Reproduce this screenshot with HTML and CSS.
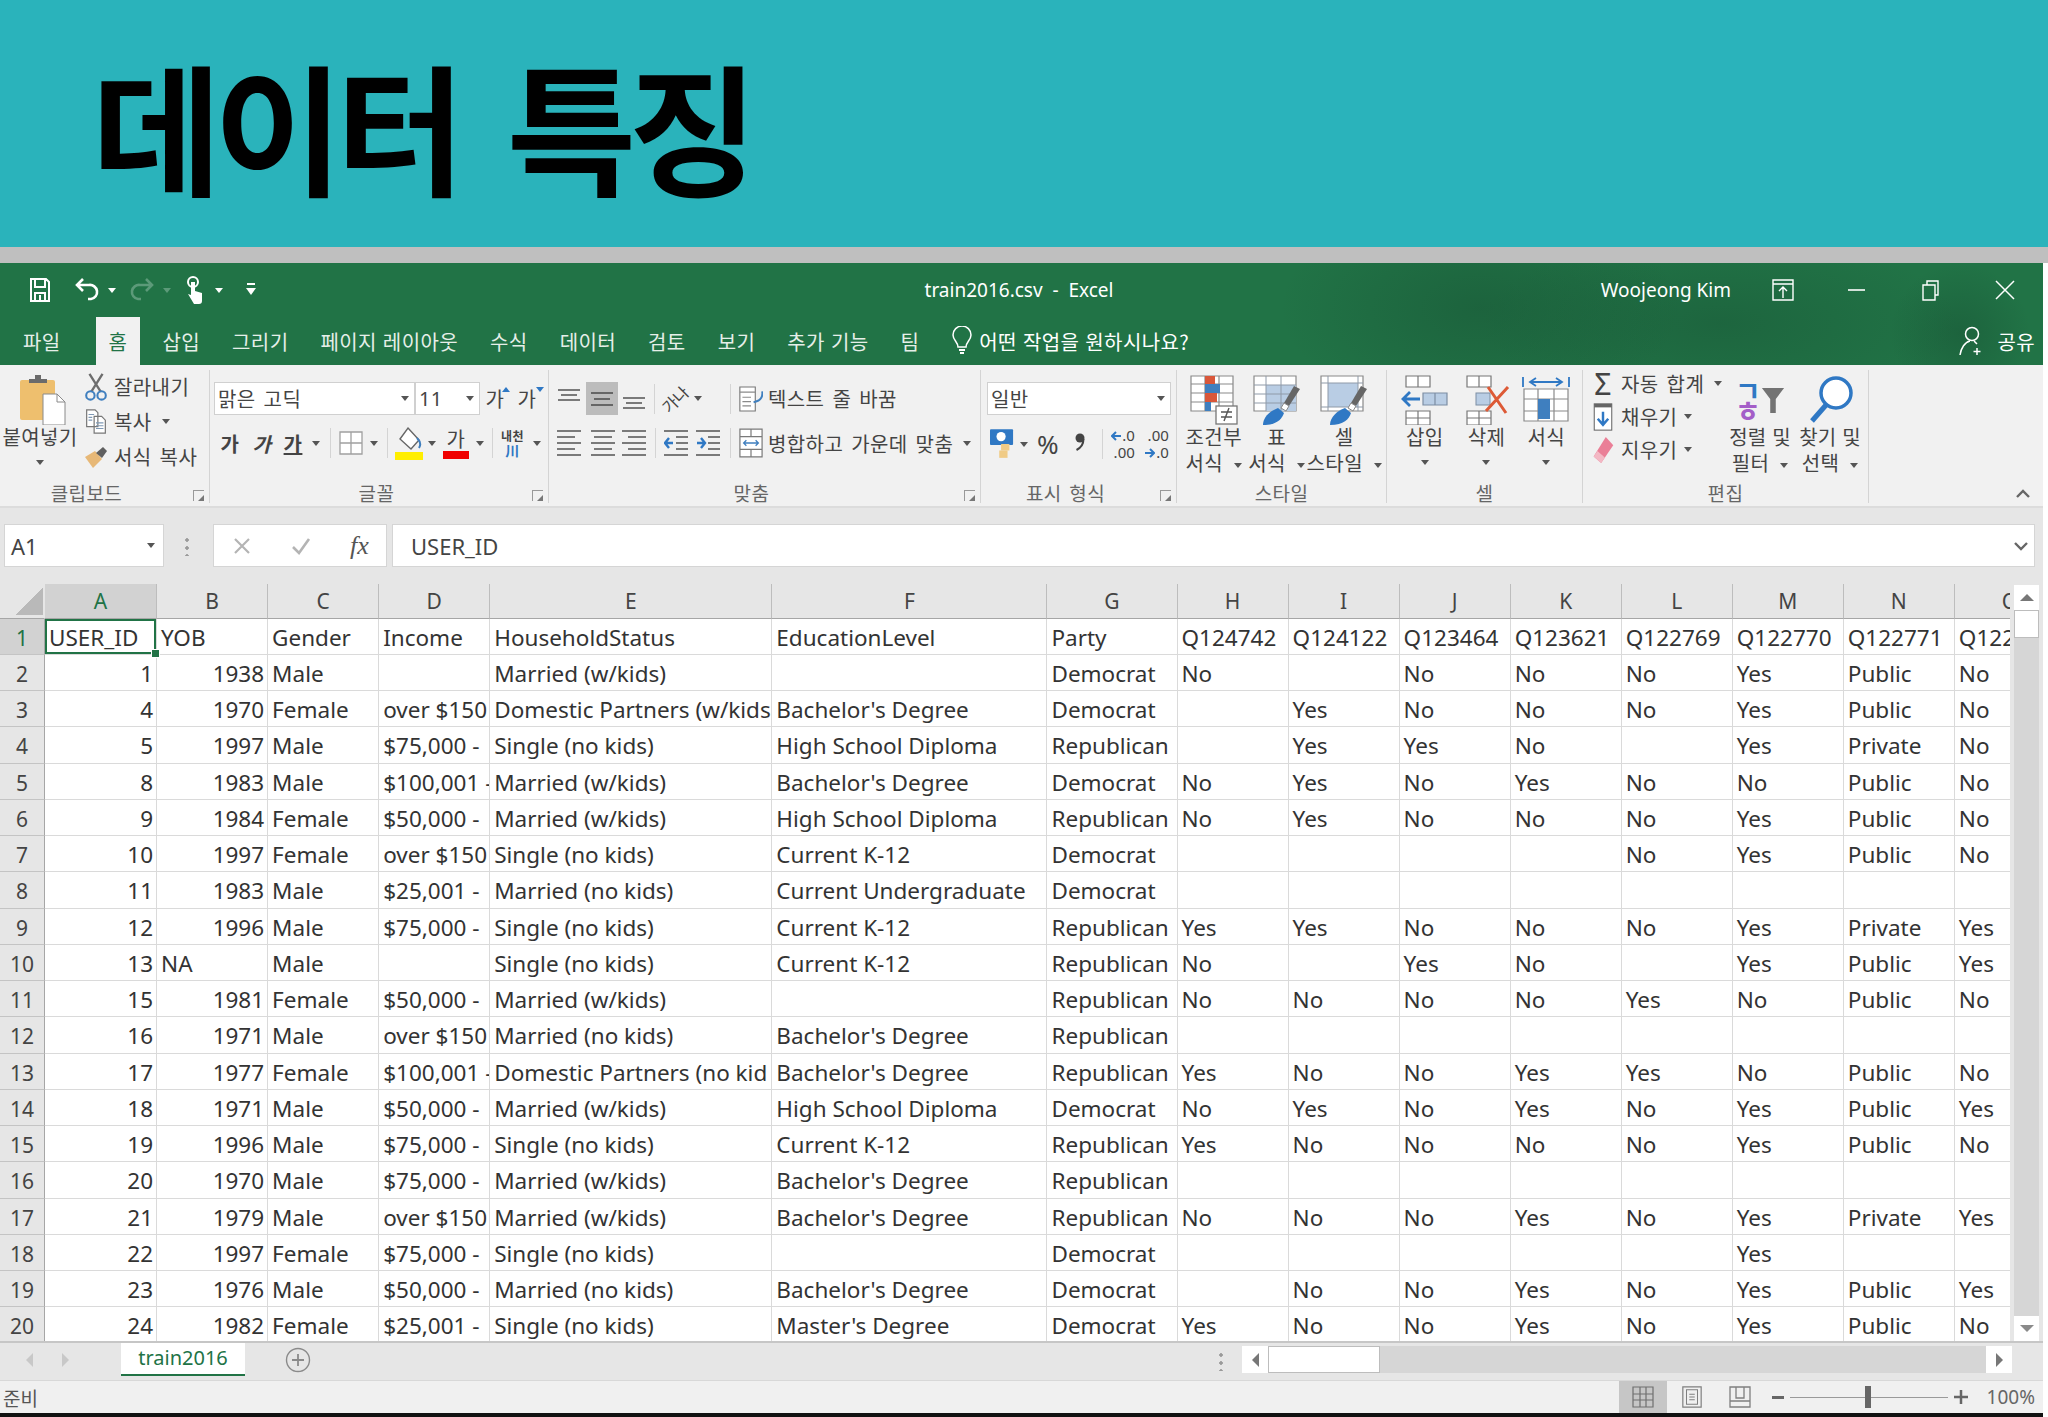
FILE: index.html
```html
<!DOCTYPE html>
<html lang="ko">
<head>
    <meta charset="UTF-8">
    <title>데이터 특징</title>
    <link rel="stylesheet" href="styles.css">
</head>
<body>
    <header class="banner">
        <h1>데이터 특징</h1>
    </header>
    <div class="band"></div>

    <main class="excel">
        <div class="chrome">
            <div class="titlebar">
                <div class="qat">
                    <svg class="qat-save" viewBox="0 0 22 26"><path d="M2 2h15l3 3v19H2zM6 2v8h10V2M6 24v-8h10v8M11 18v6" fill="none" stroke="#fff" stroke-width="2"/></svg>
                    <svg class="qat-undo" viewBox="0 0 24 28"><path d="M8 3L2 9l6 6M3 9h11a7 7 0 0 1 2 14h-3" fill="none" stroke="#fff" stroke-width="2.6"/></svg>
                    <span class="caret caret-white"></span>
                    <svg class="qat-redo" viewBox="0 0 24 28"><path d="M16 3l6 6-6 6M21 9H10a7 7 0 0 0-2 14h3" fill="none" stroke="#5c9a79" stroke-width="2.6"/></svg>
                    <span class="caret caret-dim"></span>
                    <svg class="qat-touch" viewBox="0 0 20 30"><circle cx="8" cy="7" r="5" fill="none" stroke="#fff" stroke-width="2"/><path d="M6 7h4v9l7 2v8a3 3 0 0 1-3 3H9L3 19l3 1z" fill="#fff"/></svg>
                    <span class="caret caret-white"></span>
                    <svg class="qat-more" viewBox="0 0 10 14"><path d="M1 1h8" stroke="#fff" stroke-width="2"/><path d="M0 5h10l-5 7z" fill="#fff"/></svg>
                </div>
                <div class="doc-title">train2016.csv&nbsp; - &nbsp;Excel</div>
                <div class="win-controls">
                    <span class="user-name">Woojeong Kim</span>
                    <svg class="win-icon" viewBox="0 0 22 22"><path d="M1 1h20v20H1zM1 5h20M11 19V8M7 12l4-4 4 4" fill="none" stroke="#fff" stroke-width="1.4"/></svg>
                    <svg class="win-icon" viewBox="0 0 22 22"><path d="M2 11h17" stroke="#fff" stroke-width="1.6"/></svg>
                    <svg class="win-icon" viewBox="0 0 22 22"><path d="M3 6h12v15H3zM7 6V2h11v14h-3" fill="none" stroke="#fff" stroke-width="1.4"/></svg>
                    <svg class="win-icon" viewBox="0 0 22 22"><path d="M2 2l18 18M20 2L2 20" stroke="#fff" stroke-width="1.5"/></svg>
                </div>
            </div>
            <nav class="tabs">
                <span class="tab">파일</span>
                <span class="tab tab-active">홈</span>
                <span class="tab">삽입</span>
                <span class="tab">그리기</span>
                <span class="tab">페이지 레이아웃</span>
                <span class="tab">수식</span>
                <span class="tab">데이터</span>
                <span class="tab">검토</span>
                <span class="tab">보기</span>
                <span class="tab">추가 기능</span>
                <span class="tab">팀</span>
                <span class="tell-me">
                    <svg class="bulb" viewBox="0 0 20 30"><path d="M6 21c0-5-5-7-5-12a9 9 0 0 1 18 0c0 5-5 7-5 12z" fill="none" stroke="#fff" stroke-width="1.5"/><path d="M7 24h6M8 27h4" stroke="#fff" stroke-width="2"/></svg>
                    어떤 작업을 원하시나요?
                </span>
                <span class="share">
                    <svg class="share-icon" viewBox="0 0 26 30"><circle cx="13" cy="8" r="6.5" fill="none" stroke="#fff" stroke-width="1.5"/><path d="M1 29c1-7 5-13 10-14M15 15l3 3M18 22v7M14.500 25.500h7" fill="none" stroke="#fff" stroke-width="1.5"/></svg>
                    공유
                </span>
            </nav>
        </div>

        <section class="ribbon">
            <div class="group group-clip">
                <div class="group-body clip-body">
                    <div class="big-btn paste">
                        <svg class="paste-icon" viewBox="0 0 46 50"><rect x="0" y="5" width="35" height="40" rx="2" fill="#eebf6e"/><path d="M9 8V4h6V0h6v4h6v4z" fill="#6b6b6b"/><path d="M23 19h14l8 8v23H23z" fill="#fff" stroke="#8a8a8a"/><path d="M37 19v8h8" fill="none" stroke="#8a8a8a"/></svg>
                        <span>붙여넣기</span>
                        <span class="caret big-caret"></span>
                    </div>
                    <div class="clip-list">
                        <div class="clip-row">
                            <svg class="small-icon" viewBox="0 0 24 30"><path d="M5 1l12 19M19 1L7 20" stroke="#6d6d6d" stroke-width="2.500"/><circle cx="6" cy="24" r="4.500" fill="none" stroke="#3f7fbf" stroke-width="2.200"/><circle cx="18" cy="24" r="4.500" fill="none" stroke="#3f7fbf" stroke-width="2.200"/></svg>
                            잘라내기
                        </div>
                        <div class="clip-row">
                            <svg class="small-icon" viewBox="0 0 24 30"><path d="M2 2h9l3 3v15H2zM10 9h8l4 4v14H10z" fill="#fff" stroke="#777" stroke-width="1.300"/><path d="M4 7h6M4 10h4M4 13h4M12 16h8M12 19h8M12 22h8" stroke="#7f99b5" stroke-width="1.200"/></svg>
                            복사 <span class="caret"></span>
                        </div>
                        <div class="clip-row">
                            <svg class="small-icon" viewBox="0 0 24 24"><path d="M1 12l10-6 7 8-9 9z" fill="#e7b877"/><path d="M12 8l7-6 4 4-5 7z" fill="#5f5f5f"/></svg>
                            서식 복사
                        </div>
                    </div>
                </div>
                <div class="group-label label-clip">클립보드<span class="launcher"></span></div>
            </div>

            <div class="group group-font">
                <div class="group-body tool-body">
                    <div class="font-row1">
                        <div class="select select-font">맑은 고딕<span class="caret"></span></div>
                        <div class="select select-size"><span class="latin">11</span><span class="caret"></span></div>
                        <span class="grow-btn">가<i class="tri-up"></i></span>
                        <span class="grow-btn">가<i class="tri-down"></i></span>
                    </div>
                    <div class="font-row2">
                        <b class="fmt-btn">가</b>
                        <b class="fmt-btn fmt-italic">가</b>
                        <b class="fmt-btn fmt-under">가</b>
                        <span class="caret"></span>
                        <span class="sep"></span>
                        <svg class="tool-icon" viewBox="0 0 24 24"><path d="M1 1h22v22H1zM12 1v22M1 12h22" fill="#fff" stroke="#a0a0a0" stroke-width="1.300"/></svg>
                        <span class="caret"></span>
                        <span class="sep"></span>
                        <svg class="fill-icon" viewBox="0 0 28 34"><path d="M13 2l11 12-8 9L5 13z" fill="#fff" stroke="#666" stroke-width="1.400"/><path d="M22 12c3 3 4 7 2 10" fill="none" stroke="#3f7fbf" stroke-width="2"/><rect y="26" width="28" height="8" fill="#ffee00"/></svg>
                        <span class="caret"></span>
                        <span class="color-btn">가<i class="color-bar"></i></span>
                        <span class="caret"></span>
                        <span class="sep"></span>
                        <span class="phonetic">내천<i>川</i></span>
                        <span class="caret"></span>
                    </div>
                </div>
                <div class="group-label label-font">글꼴<span class="launcher"></span></div>
            </div>

            <div class="group group-align">
                <div class="group-body tool-body">
                    <div class="align-row1">
                        <svg class="line-icon" viewBox="0 0 24 24"><path d="M1 3h22M4 8h16M1 13h22" stroke="#7a7a7a" stroke-width="1.800"/></svg>
                        <span class="align-on"><svg class="line-icon" viewBox="0 0 24 24"><path d="M1 6h22M4 12h16M1 18h22" stroke="#666" stroke-width="1.800"/></svg></span>
                        <svg class="line-icon" viewBox="0 0 24 24"><path d="M1 11h22M4 16h16M1 21h22" stroke="#7a7a7a" stroke-width="1.800"/></svg>
                        <span class="sep"></span>
                        <span class="orient">가나</span>
                        <span class="caret"></span>
                        <span></span>
                        <span class="sep"></span>
                        <svg class="tool-icon" viewBox="0 0 28 32"><path d="M1 2h18v28H1z" fill="#fff" stroke="#777" stroke-width="1.300"/><path d="M1 8h18M4 14h10M4 19h10M4 24h10" stroke="#8a8a8a" stroke-width="1.300"/><path d="M17 20l5-2M27 7c1 6-1 10-7 12" fill="none" stroke="#3f7fbf" stroke-width="2.200"/></svg>
                        <span class="tool-text">텍스트 줄 바꿈</span>
                    </div>
                    <div class="align-row2">
                        <svg class="line-icon" viewBox="0 0 24 30"><path d="M0 3h24M0 9h18M0 15h24M0 21h18M0 27h24" stroke="#7a7a7a" stroke-width="1.800"/></svg>
                        <svg class="line-icon" viewBox="0 0 24 30"><path d="M0 3h24M3 9h18M0 15h24M3 21h18M0 27h24" stroke="#7a7a7a" stroke-width="1.800"/></svg>
                        <svg class="line-icon" viewBox="0 0 24 30"><path d="M0 3h24M6 9h18M0 15h24M6 21h18M0 27h24" stroke="#7a7a7a" stroke-width="1.800"/></svg>
                        <span class="sep"></span>
                        <svg class="line-icon" viewBox="0 0 24 30"><path d="M0 3h24M12 9h12M12 15h12M12 21h12M0 27h24" stroke="#7a7a7a" stroke-width="1.800"/><path d="M9 15H1M5 10l-4 5 4 5" fill="none" stroke="#2f78c4" stroke-width="2.400"/></svg>
                        <svg class="line-icon" viewBox="0 0 24 30"><path d="M0 3h24M12 9h12M12 15h12M12 21h12M0 27h24" stroke="#7a7a7a" stroke-width="1.800"/><path d="M1 15h8M5 10l4 5-4 5" fill="none" stroke="#2f78c4" stroke-width="2.400"/></svg>
                        <span class="sep"></span>
                        <svg class="tool-icon" viewBox="0 0 26 32"><path d="M1 1h24v30H1zM1 9h24M1 23h24M13 1v8M13 23v8" fill="#fff" stroke="#7a7a7a" stroke-width="1.300"/><path d="M5 16h16M8 13l-3 3 3 3M18 13l3 3-3 3" fill="none" stroke="#3f7fbf" stroke-width="1.400"/></svg>
                        <span class="tool-text">병합하고 가운데 맞춤</span>
                        <span class="caret"></span>
                    </div>
                </div>
                <div class="group-label label-align">맞춤<span class="launcher"></span></div>
            </div>

            <div class="group group-number">
                <div class="group-body tool-body">
                    <div class="select select-number">일반<span class="caret"></span></div>
                    <div class="number-row2">
                        <svg class="tool-icon" viewBox="0 0 26 32"><rect width="25" height="17" rx="1" fill="#2f78c4"/><circle cx="12" cy="8" r="5" fill="#fff"/><rect x="12" y="16" width="9" height="7" fill="#f0cb86"/><rect x="10" y="23" width="9" height="8" fill="#f0cb86"/></svg>
                        <span class="caret"></span>
                        <span class="percent">%</span>
                        <svg class="comma" viewBox="0 0 12 18"><circle cx="6" cy="5" r="4.500" fill="#444"/><path d="M9.500 6c0 5-3 9-7 11" fill="none" stroke="#444" stroke-width="2"/></svg>
                        <span class="sep"></span>
                        <span class="decimal">
                            <span class="dec-line"><svg class="dec-arrow" viewBox="0 0 10 10"><path d="M10 5H2M5 1L1 5l4 4" fill="none" stroke="#2f78c4" stroke-width="2"/></svg>.0</span>
                            <span class="dec-line">.00</span>
                        </span>
                        <span class="decimal">
                            <span class="dec-line">.00</span>
                            <span class="dec-line"><svg class="dec-arrow" viewBox="0 0 10 10"><path d="M0 5h8M5 1l4 4-4 4" fill="none" stroke="#2f78c4" stroke-width="2"/></svg>.0</span>
                        </span>
                    </div>
                </div>
                <div class="group-label label-number">표시 형식<span class="launcher"></span></div>
            </div>

            <div class="group group-style">
                <div class="group-body big-body">
                    <div class="big-btn btn-cond">
                        <svg class="big-icon" viewBox="0 0 48 50"><path d="M1 1h42v35H1zM1 9h42M1 18h42M1 27h42M15 1v35M29 1v35" fill="#fff" stroke="#8a8a8a" stroke-width="1.200"/><rect x="15" y="1" width="10" height="8" fill="#d9573a"/><rect x="15" y="9" width="15" height="9" fill="#3f7fbf"/><rect x="15" y="18" width="12" height="9" fill="#d9573a"/><rect x="15" y="27" width="6" height="9" fill="#3f7fbf"/><rect x="26" y="31" width="21" height="18" fill="#fff" stroke="#777" stroke-width="1.300"/><path d="M31 37h11M31 42h11M39 33l-5 13" stroke="#555" stroke-width="1.400"/></svg>
                        <span>조건부</span>
                        <span>서식 <span class="caret caret-gap"></span></span>
                    </div>
                    <div class="big-btn btn-table">
                        <svg class="big-icon" viewBox="0 0 48 50"><path d="M1 1h42v35H1z" fill="#fff" stroke="#8a8a8a" stroke-width="1.200"/><rect x="13" y="10" width="30" height="26" fill="#b9cde4"/><path d="M1 10h42M1 19h42M1 28h42M13 1v35M28 1v35" stroke="#8f9aa8" stroke-width="1"/><path d="M47 14l-11 17-5-3 10-17z" fill="#666"/><path d="M31 28l5 3-3 5-5-3z" fill="#fff" stroke="#888"/><path d="M10 50c0-8 7-14 15-17l6 5c-2 6-7 12-21 12z" fill="#2f78c4"/></svg>
                        <span>표</span>
                        <span>서식 <span class="caret caret-gap"></span></span>
                    </div>
                    <div class="big-btn btn-cellstyle">
                        <svg class="big-icon" viewBox="0 0 48 50"><path d="M1 1h42v35H1z" fill="#fff" stroke="#8a8a8a" stroke-width="1.200"/><rect x="8" y="8" width="30" height="24" fill="#b9cde4"/><path d="M8 1v35M38 1v35M1 8h42M1 32h42" stroke="#8f9aa8" stroke-width="1"/><path d="M47 14l-11 17-5-3 10-17z" fill="#666"/><path d="M31 28l5 3-3 5-5-3z" fill="#fff" stroke="#888"/><path d="M10 50c0-8 7-14 15-17l6 5c-2 6-7 12-21 12z" fill="#2f78c4"/></svg>
                        <span>셀</span>
                        <span>스타일 <span class="caret caret-gap"></span></span>
                    </div>
                </div>
                <div class="group-label">스타일</div>
            </div>

            <div class="group group-cells">
                <div class="group-body big-body">
                    <div class="big-btn btn-insert">
                        <svg class="big-icon" viewBox="0 0 48 50"><path d="M5 1h24v11H5zM17 1v11M5 36h24v14H5zM17 36v14M5 43h24" fill="#fff" stroke="#777" stroke-width="1.200"/><path d="M22 18h24v12H22zM34 18v12" fill="#b9cde4" stroke="#7d8ea3" stroke-width="1.200"/><path d="M19 24H2M9 17l-7 7 7 7" fill="none" stroke="#2f78c4" stroke-width="2.800"/></svg>
                        <span>삽입</span>
                        <span class="caret big-caret"></span>
                    </div>
                    <div class="big-btn btn-delete">
                        <svg class="big-icon" viewBox="0 0 48 50"><path d="M5 1h24v11H5zM17 1v11M5 36h24v14H5zM17 36v14M5 43h24" fill="#fff" stroke="#777" stroke-width="1.200"/><rect x="14" y="18" width="14" height="12" fill="#b9cde4" stroke="#7d8ea3"/><path d="M24 36L46 12M26 12l18 26" stroke="#dd5a36" stroke-width="3"/></svg>
                        <span>삭제</span>
                        <span class="caret big-caret"></span>
                    </div>
                    <div class="big-btn btn-format">
                        <svg class="big-icon" viewBox="0 0 48 50"><path d="M1 2v10M47 2v10M8 7h32M14 3L8 7l6 4M34 3l6 4-6 4" fill="none" stroke="#2f78c4" stroke-width="1.800"/><path d="M2 14h44v32H2zM2 24h44M2 36h44M16 14v32M32 14v32" fill="#fff" stroke="#8a8a8a" stroke-width="1.200"/><rect x="16" y="24" width="12" height="20" fill="#3f7fbf"/></svg>
                        <span>서식</span>
                        <span class="caret big-caret"></span>
                    </div>
                </div>
                <div class="group-label">셀</div>
            </div>

            <div class="group group-edit">
                <div class="group-body big-body">
                    <div class="edit-list">
                        <div class="edit-row"><span class="sigma">Σ</span>자동 합계 <span class="caret caret-sum"></span></div>
                        <div class="edit-row">
                            <svg class="small-icon" viewBox="0 0 22 32"><rect x="1" y="1" width="20" height="30" fill="#fff" stroke="#666" stroke-width="1.200"/><rect x="1" y="1" width="20" height="4" fill="#666"/><path d="M11 10v15M5 18l6 7 6-7" fill="none" stroke="#2f78c4" stroke-width="2.800"/></svg>
                            채우기 <span class="caret"></span>
                        </div>
                        <div class="edit-row">
                            <svg class="small-icon" viewBox="0 0 22 30"><path d="M14 1l8 9-13 19-8-7z" fill="#ea7f97"/><path d="M5 16l8 7-4 6-8-7z" fill="#f3b8c4"/></svg>
                            지우기 <span class="caret"></span>
                        </div>
                    </div>
                    <div class="big-btn btn-sort">
                        <div class="sort-icon">
                            <span class="sort-jamo"><i class="jamo-blue">ㄱ</i><i class="jamo-purple">ㅎ</i></span>
                            <svg class="funnel" viewBox="0 0 26 30"><path d="M1 2h24L16 14v15H10V14z" fill="#737373"/></svg>
                        </div>
                        <span class="tight">정렬 및</span>
                        <span>필터 <span class="caret caret-gap"></span></span>
                    </div>
                    <div class="big-btn btn-find">
                        <svg class="big-icon" viewBox="0 0 48 50"><circle cx="30" cy="18" r="15" fill="#fff" stroke="#2f78c4" stroke-width="3.500"/><path d="M20 30L6 46" stroke="#2f78c4" stroke-width="5"/></svg>
                        <span class="tight">찾기 및</span>
                        <span>선택 <span class="caret caret-gap"></span></span>
                    </div>
                </div>
                <div class="group-label">편집</div>
            </div>
            <svg class="collapse" viewBox="0 0 14 10"><path d="M1 8l6-6 6 6" fill="none" stroke="#666" stroke-width="2.400"/></svg>
        </section>

        <section class="formula-row">
            <div class="name-box">A1<span class="caret"></span></div>
            <span class="dots dots-formula"></span>
            <div class="fx-box">
                <svg class="fx-mark" viewBox="0 0 20 20"><path d="M3 3l14 14M17 3L3 17" stroke="#b4b4b4" stroke-width="2.200"/></svg>
                <svg class="fx-mark" viewBox="0 0 20 20"><path d="M2 11l6 6L18 3" fill="none" stroke="#b4b4b4" stroke-width="2.600"/></svg>
                <i class="fx-text">fx</i>
            </div>
            <div class="formula-input">USER_ID
                <svg class="formula-more" viewBox="0 0 14 10"><path d="M1 2l6 6 6-6" fill="none" stroke="#666" stroke-width="2.400"/></svg>
            </div>
        </section>

        <section class="sheet">
            <div class="grid-wrap">
                <table class="grid">
                    <colgroup>
                        <col class="c-head"><col class="c-a"><col class="c-std"><col class="c-std"><col class="c-std"><col class="c-e"><col class="c-f"><col class="c-g"><col class="c-std"><col class="c-std"><col class="c-std"><col class="c-std"><col class="c-std"><col class="c-std"><col class="c-std"><col class="c-std">
                    </colgroup>
                    <thead>
                        <tr><th class="corner"></th><th class="col-on">A</th><th>B</th><th>C</th><th>D</th><th>E</th><th>F</th><th>G</th><th>H</th><th>I</th><th>J</th><th>K</th><th>L</th><th>M</th><th>N</th><th>O</th></tr>
                    </thead>
                    <tbody>
                        <tr><th class="row-on">1</th><td class="cell-active">USER_ID</td><td>YOB</td><td>Gender</td><td>Income</td><td>HouseholdStatus</td><td>EducationLevel</td><td>Party</td><td>Q124742</td><td>Q124122</td><td>Q123464</td><td>Q123621</td><td>Q122769</td><td>Q122770</td><td>Q122771</td><td>Q122120</td></tr>
                        <tr><th>2</th><td class="num">1</td><td class="num">1938</td><td>Male</td><td></td><td>Married (w/kids)</td><td></td><td>Democrat</td><td>No</td><td></td><td>No</td><td>No</td><td>No</td><td>Yes</td><td>Public</td><td>No</td></tr>
                        <tr><th>3</th><td class="num">4</td><td class="num">1970</td><td>Female</td><td>over $150</td><td>Domestic Partners (w/kids</td><td>Bachelor's Degree</td><td>Democrat</td><td></td><td>Yes</td><td>No</td><td>No</td><td>No</td><td>Yes</td><td>Public</td><td>No</td></tr>
                        <tr><th>4</th><td class="num">5</td><td class="num">1997</td><td>Male</td><td>$75,000 -</td><td>Single (no kids)</td><td>High School Diploma</td><td>Republican</td><td></td><td>Yes</td><td>Yes</td><td>No</td><td></td><td>Yes</td><td>Private</td><td>No</td></tr>
                        <tr><th>5</th><td class="num">8</td><td class="num">1983</td><td>Male</td><td>$100,001 -</td><td>Married (w/kids)</td><td>Bachelor's Degree</td><td>Democrat</td><td>No</td><td>Yes</td><td>No</td><td>Yes</td><td>No</td><td>No</td><td>Public</td><td>No</td></tr>
                        <tr><th>6</th><td class="num">9</td><td class="num">1984</td><td>Female</td><td>$50,000 -</td><td>Married (w/kids)</td><td>High School Diploma</td><td>Republican</td><td>No</td><td>Yes</td><td>No</td><td>No</td><td>No</td><td>Yes</td><td>Public</td><td>No</td></tr>
                        <tr><th>7</th><td class="num">10</td><td class="num">1997</td><td>Female</td><td>over $150</td><td>Single (no kids)</td><td>Current K-12</td><td>Democrat</td><td></td><td></td><td></td><td></td><td>No</td><td>Yes</td><td>Public</td><td>No</td></tr>
                        <tr><th>8</th><td class="num">11</td><td class="num">1983</td><td>Male</td><td>$25,001 -</td><td>Married (no kids)</td><td>Current Undergraduate</td><td>Democrat</td><td></td><td></td><td></td><td></td><td></td><td></td><td></td><td></td></tr>
                        <tr><th>9</th><td class="num">12</td><td class="num">1996</td><td>Male</td><td>$75,000 -</td><td>Single (no kids)</td><td>Current K-12</td><td>Republican</td><td>Yes</td><td>Yes</td><td>No</td><td>No</td><td>No</td><td>Yes</td><td>Private</td><td>Yes</td></tr>
                        <tr><th>10</th><td class="num">13</td><td>NA</td><td>Male</td><td></td><td>Single (no kids)</td><td>Current K-12</td><td>Republican</td><td>No</td><td></td><td>Yes</td><td>No</td><td></td><td>Yes</td><td>Public</td><td>Yes</td></tr>
                        <tr><th>11</th><td class="num">15</td><td class="num">1981</td><td>Female</td><td>$50,000 -</td><td>Married (w/kids)</td><td></td><td>Republican</td><td>No</td><td>No</td><td>No</td><td>No</td><td>Yes</td><td>No</td><td>Public</td><td>No</td></tr>
                        <tr><th>12</th><td class="num">16</td><td class="num">1971</td><td>Male</td><td>over $150</td><td>Married (no kids)</td><td>Bachelor's Degree</td><td>Republican</td><td></td><td></td><td></td><td></td><td></td><td></td><td></td><td></td></tr>
                        <tr><th>13</th><td class="num">17</td><td class="num">1977</td><td>Female</td><td>$100,001 -</td><td>Domestic Partners (no kid</td><td>Bachelor's Degree</td><td>Republican</td><td>Yes</td><td>No</td><td>No</td><td>Yes</td><td>Yes</td><td>No</td><td>Public</td><td>No</td></tr>
                        <tr><th>14</th><td class="num">18</td><td class="num">1971</td><td>Male</td><td>$50,000 -</td><td>Married (w/kids)</td><td>High School Diploma</td><td>Democrat</td><td>No</td><td>Yes</td><td>No</td><td>Yes</td><td>No</td><td>Yes</td><td>Public</td><td>Yes</td></tr>
                        <tr><th>15</th><td class="num">19</td><td class="num">1996</td><td>Male</td><td>$75,000 -</td><td>Single (no kids)</td><td>Current K-12</td><td>Republican</td><td>Yes</td><td>No</td><td>No</td><td>No</td><td>No</td><td>Yes</td><td>Public</td><td>No</td></tr>
                        <tr><th>16</th><td class="num">20</td><td class="num">1970</td><td>Male</td><td>$75,000 -</td><td>Married (w/kids)</td><td>Bachelor's Degree</td><td>Republican</td><td></td><td></td><td></td><td></td><td></td><td></td><td></td><td></td></tr>
                        <tr><th>17</th><td class="num">21</td><td class="num">1979</td><td>Male</td><td>over $150</td><td>Married (w/kids)</td><td>Bachelor's Degree</td><td>Republican</td><td>No</td><td>No</td><td>No</td><td>Yes</td><td>No</td><td>Yes</td><td>Private</td><td>Yes</td></tr>
                        <tr><th>18</th><td class="num">22</td><td class="num">1997</td><td>Female</td><td>$75,000 -</td><td>Single (no kids)</td><td></td><td>Democrat</td><td></td><td></td><td></td><td></td><td></td><td>Yes</td><td></td><td></td></tr>
                        <tr><th>19</th><td class="num">23</td><td class="num">1976</td><td>Male</td><td>$50,000 -</td><td>Married (no kids)</td><td>Bachelor's Degree</td><td>Democrat</td><td></td><td>No</td><td>No</td><td>Yes</td><td>No</td><td>Yes</td><td>Public</td><td>Yes</td></tr>
                        <tr><th>20</th><td class="num">24</td><td class="num">1982</td><td>Female</td><td>$25,001 -</td><td>Single (no kids)</td><td>Master's Degree</td><td>Democrat</td><td>Yes</td><td>No</td><td>No</td><td>Yes</td><td>No</td><td>Yes</td><td>Public</td><td>No</td></tr>
                    </tbody>
                </table>
            </div>
            <div class="vscroll">
                <div class="scroll-btn"><span class="tri tri-n"></span></div>
                <div class="vthumb"></div>
                <div class="vtrack"></div>
                <div class="scroll-btn scroll-btn-end"><span class="tri tri-s"></span></div>
            </div>
        </section>

        <section class="tabbar">
            <span class="nav-arrows"><span class="tri tri-w tri-light"></span><span class="tri tri-e tri-light"></span></span>
            <span class="sheet-tab">train2016</span>
            <svg class="add-sheet" viewBox="0 0 26 26"><circle cx="13" cy="13" r="11.500" fill="none" stroke="#8a8a8a" stroke-width="1.400"/><path d="M13 7v12M7 13h12" stroke="#8a8a8a" stroke-width="1.800"/></svg>
            <span class="dots dots-tab"></span>
            <div class="hscroll">
                <div class="hbtn"><span class="tri tri-w"></span></div>
                <div class="hthumb"></div>
                <div class="htrack"></div>
                <div class="hbtn"><span class="tri tri-e"></span></div>
            </div>
        </section>

        <footer class="status">
            <span class="ready">준비</span>
            <div class="status-right">
                <span class="view-on"><svg class="view-icon" viewBox="0 0 22 22"><path d="M1 1h20v20H1zM8 1v20M14 1v20M1 8h20M1 14h20" fill="none" stroke="#6f6f6f" stroke-width="1.200"/></svg></span>
                <svg class="view-icon" viewBox="0 0 22 24"><path d="M1 1h20v22H1z" fill="none" stroke="#7f7f7f" stroke-width="1.300"/><path d="M5 4h12v16H5zM8 9h6M8 12h6M8 15h6" fill="none" stroke="#7f7f7f" stroke-width="1.100"/></svg>
                <svg class="view-icon" viewBox="0 0 22 22"><path d="M1 1h20v20H1zM7 1v11h8V1M1 15h20" fill="none" stroke="#7f7f7f" stroke-width="1.300"/></svg>
                <div class="zoom-slider">
                    <span class="zoom-minus"></span>
                    <span class="zoom-line"><i class="zoom-thumb"></i></span>
                    <svg class="zoom-plus" viewBox="0 0 14 14"><path d="M7 0v14M0 7h14" stroke="#666" stroke-width="2.500"/></svg>
                </div>
                <span class="zoom-value">100%</span>
            </div>
        </footer>
    </main>
</body>
</html>
```

FILE: styles.css
```css
* {
    box-sizing: border-box;
}

html,
body {
    margin: 0;
    height: 1417px;
    overflow: hidden;
}

body {
    background-color: #fff;
    font-family: "Noto Sans CJK KR", "Noto Sans", sans-serif;
    color: #444;
    position: relative;
}

svg {
    display: block;
}

/* top slide title */

.banner {
    height: 247px;
    background-color: #2ab3bb;
    display: flex;
    align-items: center;
    padding-left: 92px;
}

.banner h1 {
    margin: 0;
    color: #000;
    font-size: 141px;
    font-weight: 700;
    line-height: 1;
    letter-spacing: -8px;
    word-spacing: 18px;
    white-space: nowrap;
}

.band {
    height: 16px;
    background-color: #bfbfbf;
}

.excel {
    width: 2043px;
    height: 1154px;
    display: flex;
    flex-direction: column;
    background-color: #e6e6e6;
    border-bottom: 4px solid #111;
}

/* title bar and tabs */

.chrome {
    height: 102px;
    background-color: #217346;
    background-image:
        radial-gradient(ellipse 200px 110px at 1480px 45px, rgba(20, 70, 45, 0.35), transparent 100%),
        radial-gradient(ellipse 240px 90px at 1720px 60px, rgba(20, 70, 45, 0.3), transparent 100%),
        radial-gradient(ellipse 70px 70px at 1960px 70px, rgba(20, 70, 45, 0.35), transparent 100%);
    color: #fff;
}

.titlebar {
    height: 54px;
    display: grid;
    grid-template-columns: 1fr auto 1fr;
    align-items: center;
}

.qat {
    display: flex;
    align-items: center;
    padding-left: 29px;
}

.qat-save { width: 22px; height: 26px; margin-right: 24px; }
.qat-undo { width: 24px; height: 28px; margin-right: 9px; }
.qat-redo { width: 24px; height: 28px; margin: 0 9px 0 14px; }
.qat-touch { width: 20px; height: 30px; margin: 0 10px 0 14px; }
.qat-more { width: 10px; height: 14px; margin-left: 23px; }

.doc-title {
    font-family: "Noto Sans", sans-serif;
    font-size: 19px;
    white-space: nowrap;
    padding-right: 5px;
}

.win-controls {
    display: flex;
    align-items: center;
    justify-content: flex-end;
}

.user-name {
    font-family: "Noto Sans", sans-serif;
    font-size: 19px;
    margin-right: 41px;
    white-space: nowrap;
}

.win-icon {
    width: 22px;
    height: 22px;
    margin-right: 52px;
}

.win-icon:last-child {
    margin-right: 27px;
}

.tabs {
    height: 48px;
    display: flex;
    align-items: center;
    padding-left: 7px;
    font-size: 20px;
    letter-spacing: 0.4px;
}

.tab {
    padding: 0 16px;
    height: 100%;
    display: flex;
    align-items: center;
    white-space: nowrap;
    color: #e6efe9;
}

.tab-active {
    margin-left: 19px;
    margin-right: 6px;
    padding: 0 13px;
    background-color: #f1f1f1;
    color: #217346;
}

.tell-me {
    display: flex;
    align-items: center;
    gap: 7px;
    margin-left: 17px;
    white-space: nowrap;
}

.bulb {
    width: 20px;
    height: 30px;
}

.share {
    margin-left: auto;
    margin-right: 8px;
    display: flex;
    align-items: center;
    gap: 12px;
}

.share-icon {
    width: 26px;
    height: 30px;
}

/* ribbon */

.ribbon {
    height: 143px;
    display: flex;
    padding: 5px 0;
    background-color: #f1f1f1;
    border-bottom: 2px solid #dcdcdc;
    font-size: 20px;
    letter-spacing: 0.4px;
    word-spacing: 2px;
    position: relative;
}

.group {
    height: 133px;
    display: flex;
    flex-direction: column;
    border-right: 1px solid #d4d4d4;
    flex: none;
}

.group-clip { width: 210px; }
.group-font { width: 339px; }
.group-align { width: 432px; }
.group-number { width: 196px; }
.group-style { width: 210px; }
.group-cells { width: 196px; }
.group-edit { width: 286px; }

.group-body {
    height: 112px;
}

.group-label {
    height: 21px;
    line-height: 21px;
    font-size: 19px;
    color: #666;
    text-align: center;
    position: relative;
}

.label-clip { padding-right: 36px; }
.label-font { padding-right: 5px; }
.label-align { padding-right: 26px; }
.label-number { padding-right: 26px; }

.launcher {
    position: absolute;
    right: 5px;
    bottom: 2px;
    width: 11px;
    height: 11px;
    border-left: 1px solid #999;
    border-top: 1px solid #999;
}

.launcher::after {
    content: "";
    position: absolute;
    right: 0;
    bottom: 0;
    border-left: 6px solid transparent;
    border-bottom: 6px solid #777;
}

.caret {
    display: inline-block;
    width: 0;
    height: 0;
    border-left: 4px solid transparent;
    border-right: 4px solid transparent;
    border-top: 5px solid #555;
}

.caret-white { border-top-color: #fff; }
.caret-dim { border-top-color: #5c9a79; margin-left: 0; }
.caret-gap { margin: 0 0 3px 3px; }
.big-caret { margin-top: 10px; }

.big-btn {
    display: flex;
    flex-direction: column;
    align-items: center;
    line-height: 26px;
    white-space: nowrap;
}

.tight {
    letter-spacing: 0.2px;
    word-spacing: 0;
}

.big-icon {
    width: 48px;
    height: 50px;
    margin-bottom: -1px;
}

.clip-body {
    display: flex;
}

.paste {
    width: 80px;
    padding-top: 5px;
}

.paste-icon {
    width: 46px;
    height: 50px;
    margin-left: 6px;
    margin-bottom: -1px;
}

.clip-list {
    display: flex;
    flex-direction: column;
    margin-top: -1px;
}

.clip-row {
    height: 35px;
    display: flex;
    align-items: center;
    white-space: nowrap;
    gap: 6px;
    padding-left: 4px;
}

.clip-row .caret {
    margin-left: 4px;
}

.small-icon {
    width: 24px;
    height: 28px;
}

.tool-body {
    padding-top: 12px;
}

.select {
    height: 33px;
    background-color: #fff;
    border: 1px solid #d0d0d0;
    display: flex;
    align-items: center;
    justify-content: space-between;
    padding: 0 5px 0 3px;
}

.latin {
    font-family: "Noto Sans", sans-serif;
}

.font-row1 {
    display: grid;
    grid-template-columns: 201px 65px 30px 34px;
    align-items: center;
    margin-left: 4px;
}

.grow-btn {
    position: relative;
    text-align: center;
    line-height: 30px;
}

.tri-up,
.tri-down {
    position: absolute;
    right: 0;
    top: 3px;
    border-left: 4px solid transparent;
    border-right: 4px solid transparent;
}

.tri-up { border-bottom: 5px solid #2f78c4; }
.tri-down { border-top: 5px solid #2f78c4; }

.font-row2 {
    display: grid;
    grid-template-columns: 32px 32px 30px 16px 12px 30px 15px 12px 32px 14px 34px 13px 12px 29px 20px;
    align-items: center;
    justify-items: center;
    height: 34px;
    margin: 11px 0 0 4px;
}

.fmt-btn {
    font-size: 20px;
    color: #444;
}

.fmt-italic { font-style: italic; }
.fmt-under { text-decoration: underline; }

.sep {
    width: 1px;
    height: 30px;
    background-color: #d4d4d4;
}

.tool-icon {
    width: 24px;
    height: 30px;
}

.fill-icon {
    width: 28px;
    height: 34px;
}

.color-btn {
    display: flex;
    flex-direction: column;
    align-items: center;
    line-height: 24px;
}

.color-bar {
    width: 26px;
    height: 8px;
    background-color: #f00000;
}

.phonetic {
    display: flex;
    flex-direction: column;
    align-items: center;
    font-size: 12px;
    line-height: 15px;
    font-weight: 700;
}

.phonetic i {
    color: #2f78c4;
    font-style: normal;
    font-size: 14px;
}

.align-row1,
.align-row2 {
    display: grid;
    align-items: center;
    justify-items: center;
    margin-left: 3px;
}

.align-row1 {
    height: 33px;
    grid-template-columns: 34px 32px 32px 8px 34px 12px 22px 8px 34px auto;
}

.align-row2 {
    height: 34px;
    margin-top: 11px;
    grid-template-columns: 34px 34px 28px 14px 28px 36px 8px 34px 190px 18px;
}

.line-icon {
    width: 24px;
    height: 30px;
}

.align-on {
    width: 32px;
    height: 33px;
    background-color: #bcbcbc;
    display: flex;
    align-items: center;
    justify-content: center;
}

.orient {
    font-size: 16px;
    letter-spacing: 0;
    color: #444;
    transform: rotate(-45deg);
    white-space: nowrap;
}

.tool-text {
    white-space: nowrap;
    justify-self: start;
}

.select-number {
    width: 184px;
    margin-left: 6px;
}

.number-row2 {
    display: grid;
    grid-template-columns: 29px 16px 32px 32px 12px 30px 38px;
    align-items: center;
    justify-items: center;
    height: 34px;
    margin: 11px 0 0 6px;
}

.percent {
    font-family: "Noto Sans", sans-serif;
    font-size: 26px;
}

.comma {
    width: 12px;
    height: 18px;
    margin-bottom: 4px;
}

.decimal {
    display: flex;
    flex-direction: column;
    align-items: flex-end;
    font-family: "Noto Sans", sans-serif;
    font-size: 15px;
    letter-spacing: 0;
}

.dec-line {
    display: flex;
    align-items: center;
    gap: 1px;
    height: 17px;
    line-height: 17px;
    white-space: nowrap;
}

.dec-arrow {
    width: 10px;
    height: 10px;
}

.big-body {
    display: flex;
    padding-top: 5px;
}

.btn-cond { width: 74px; }
.btn-table { width: 52px; }
.btn-cellstyle { width: 84px; }
.btn-insert { width: 76px; }
.btn-delete { width: 48px; }
.btn-format { width: 72px; }
.btn-sort { width: 64px; }
.btn-find { width: 76px; }

.sort-icon {
    width: 50px;
    height: 49px;
    display: flex;
    align-items: center;
}

.sort-jamo {
    display: flex;
    flex-direction: column;
    width: 28px;
    font-size: 28px;
    font-weight: 700;
    line-height: 20px;
    letter-spacing: 0;
}

.sort-jamo i {
    font-style: normal;
}

.jamo-blue { color: #2f78c4; }
.jamo-purple { color: #a45ec8; }

.funnel {
    width: 24px;
    height: 28px;
    margin-left: -2px;
}

.edit-list {
    width: 145px;
    margin-top: -8px;
    padding-left: 9px;
}

.edit-row {
    height: 33px;
    display: flex;
    align-items: center;
    gap: 7px;
    white-space: nowrap;
}

.caret-sum {
    margin-left: 3px;
}

.sigma {
    width: 22px;
    font-family: "Noto Sans", sans-serif;
    font-size: 30px;
    line-height: 30px;
    text-align: center;
    color: #444;
}

.edit-row .small-icon {
    width: 22px;
}

.collapse {
    position: absolute;
    right: 13px;
    bottom: 7px;
    width: 14px;
    height: 10px;
}

/* formula bar */

.formula-row {
    height: 70px;
    padding: 16px 8px 11px 4px;
    display: flex;
    align-items: stretch;
    background-color: #e6e6e6;
    flex: none;
}

.name-box,
.fx-box,
.formula-input {
    background-color: #fff;
    border: 1px solid #d5d5d5;
    font-family: "Noto Sans", sans-serif;
    font-size: 22px;
    color: #444;
    display: flex;
    align-items: center;
}

.name-box {
    width: 160px;
    padding: 0 8px 0 6px;
    justify-content: space-between;
}

.dots {
    width: 4px;
    flex: none;
    height: 20px;
    background-image: radial-gradient(circle, #9a9a9a 1.500px, transparent 2px);
    background-size: 4px 8px;
}

.dots-formula {
    margin: 0 24px 0 21px;
    align-self: center;
}

.fx-box {
    width: 174px;
    padding-left: 18px;
    gap: 39px;
}

.fx-mark {
    width: 20px;
    height: 20px;
    flex: none;
}

.fx-text {
    font-family: "Liberation Serif", serif;
    font-size: 26px;
    color: #555;
}

.formula-input {
    flex: 1;
    margin-left: 5px;
    padding: 0 6px 0 18px;
    justify-content: space-between;
}

.formula-more {
    width: 14px;
    height: 10px;
}

/* worksheet */

.sheet {
    height: 765px;
    display: flex;
    flex: none;
    background-color: #e6e6e6;
    border-bottom: 2px solid #c6c6c6;
}

.grid-wrap {
    width: 2010px;
    flex: none;
    overflow: hidden;
    padding-top: 6px;
}

.grid {
    table-layout: fixed;
    width: 2066px;
    border-collapse: separate;
    border-spacing: 0;
    font-family: "Noto Sans", sans-serif;
    font-size: 22.5px;
    color: #333;
}

.c-head { width: 45px; }
.c-a { width: 112px; }
.c-std { width: 111px; }
.c-e { width: 282px; }
.c-f { width: 275px; }
.c-g { width: 130px; }

.grid thead th {
    height: 35px;
    font-weight: 400;
    font-size: 21px;
    background-color: #e6e6e6;
    border-right: 1px solid #bdbdbd;
    border-bottom: 1px solid #a6a6a6;
    color: #444;
    padding: 0;
}

.grid thead th.corner {
    border-right: 1px solid #e6e6e6;
    background-image: linear-gradient(to bottom right, transparent 50%, #b9b9b9 50%);
    background-size: 28px 28px;
    background-position: 15px 3px;
    background-repeat: no-repeat;
}

.grid thead th.col-on {
    background-color: #d2d2d2;
    color: #217346;
}

/* rows are 36.2px on screen, table rows only take whole pixels */
.grid tbody tr {
    height: 36px;
}

.grid tbody tr:nth-child(4n) {
    height: 37px;
}

.grid tbody th {
    font-weight: 400;
    font-size: 21px;
    background-color: #e6e6e6;
    border-right: 1px solid #a6a6a6;
    border-bottom: 1px solid #c4c4c4;
    color: #444;
    padding: 2px 0 0;
}

.grid tbody th.row-on {
    background-color: #d2d2d2;
    color: #217346;
}

.grid td {
    background-color: #fff;
    border-right: 1px solid #dadada;
    border-bottom: 1px solid #dadada;
    padding: 2px 4px 0;
    height: 36px;
    line-height: 30px;
    white-space: nowrap;
    overflow: hidden;
}

.grid td.num {
    text-align: right;
    padding-right: 3px;
}

.grid td.cell-active {
    box-shadow: inset 0 0 0 2px #217346;
    overflow: visible;
    position: relative;
}

.cell-active::after {
    content: "";
    position: absolute;
    right: -4px;
    bottom: -4px;
    width: 7px;
    height: 7px;
    background-color: #217346;
    border: 1px solid #fff;
}

.vscroll {
    flex: 1;
    display: flex;
    flex-direction: column;
    padding: 7px 4px 0;
}

.scroll-btn {
    height: 25px;
    background-color: #fff;
    display: flex;
    align-items: center;
    justify-content: center;
    flex: none;
}

.vthumb {
    height: 28px;
    background-color: #fff;
    border: 1px solid #bdbdbd;
    flex: none;
}

.vtrack {
    flex: 1;
    background-color: #d6d6d6;
}

.tri {
    display: inline-block;
    width: 0;
    height: 0;
}

.tri-n { border-left: 7px solid transparent; border-right: 7px solid transparent; border-bottom: 7px solid #777; }
.tri-s { border-left: 7px solid transparent; border-right: 7px solid transparent; border-top: 7px solid #8a8a8a; }
.tri-w { border-top: 7px solid transparent; border-bottom: 7px solid transparent; border-right: 7px solid #777; }
.tri-e { border-top: 7px solid transparent; border-bottom: 7px solid transparent; border-left: 7px solid #777; }
.tri-light { border-left-color: #c8c8c8; border-right-color: #c8c8c8; }
.tri-w.tri-light { border-left-color: transparent; }
.tri-e.tri-light { border-right-color: transparent; }

/* sheet tabs and scrollbar */

.tabbar {
    height: 37px;
    display: flex;
    align-items: flex-start;
    background-color: #e6e6e6;
    flex: none;
}

.nav-arrows {
    width: 121px;
    height: 34px;
    display: flex;
    align-items: center;
    gap: 29px;
    padding-left: 26px;
}

.sheet-tab {
    width: 124px;
    height: 33px;
    background-color: #fff;
    border-bottom: 2px solid #217346;
    color: #217346;
    font-family: "Noto Sans", sans-serif;
    font-size: 20px;
    line-height: 30px;
    text-align: center;
}

.add-sheet {
    width: 26px;
    height: 26px;
    margin: 4px 0 0 40px;
}

.dots-tab {
    margin: 8px 0 0 908px;
}

.hscroll {
    display: flex;
    height: 27px;
    width: 770px;
    margin: 3px 0 0 19px;
}

.hbtn {
    width: 26px;
    background-color: #fff;
    display: flex;
    align-items: center;
    justify-content: center;
    flex: none;
}

.hthumb {
    width: 112px;
    background-color: #fff;
    border: 1px solid #bdbdbd;
    flex: none;
}

.htrack {
    flex: 1;
    background-color: #d6d6d6;
}

/* status bar */

.status {
    height: 33px;
    background-color: #f0f0f0;
    border-top: 1px solid #d8d8d8;
    display: flex;
    align-items: center;
    justify-content: space-between;
    padding-left: 3px;
    font-size: 19px;
    color: #555;
    flex: none;
}

.status-right {
    display: flex;
    align-items: center;
    height: 100%;
}

.view-on {
    width: 48px;
    height: 100%;
    background-color: #c6c6c6;
    display: flex;
    align-items: center;
    justify-content: center;
}

.view-icon {
    width: 22px;
    height: 22px;
}

.status-right > .view-icon {
    margin-left: 14px;
}

.status-right > .view-icon + .view-icon {
    margin-left: 26px;
}

.zoom-slider {
    display: flex;
    align-items: center;
    margin-left: 21px;
}

.zoom-minus {
    width: 12px;
    height: 3px;
    background-color: #666;
}

.zoom-line {
    width: 158px;
    height: 1px;
    margin: 0 6px;
    background-color: #9a9a9a;
    position: relative;
}

.zoom-thumb {
    position: absolute;
    left: 75px;
    top: -11px;
    width: 6px;
    height: 22px;
    background-color: #666;
}

.zoom-plus {
    width: 14px;
    height: 14px;
}

.zoom-value {
    font-family: "Noto Sans", sans-serif;
    font-size: 19px;
    color: #666;
    margin: 0 8px 0 19px;
}
```
